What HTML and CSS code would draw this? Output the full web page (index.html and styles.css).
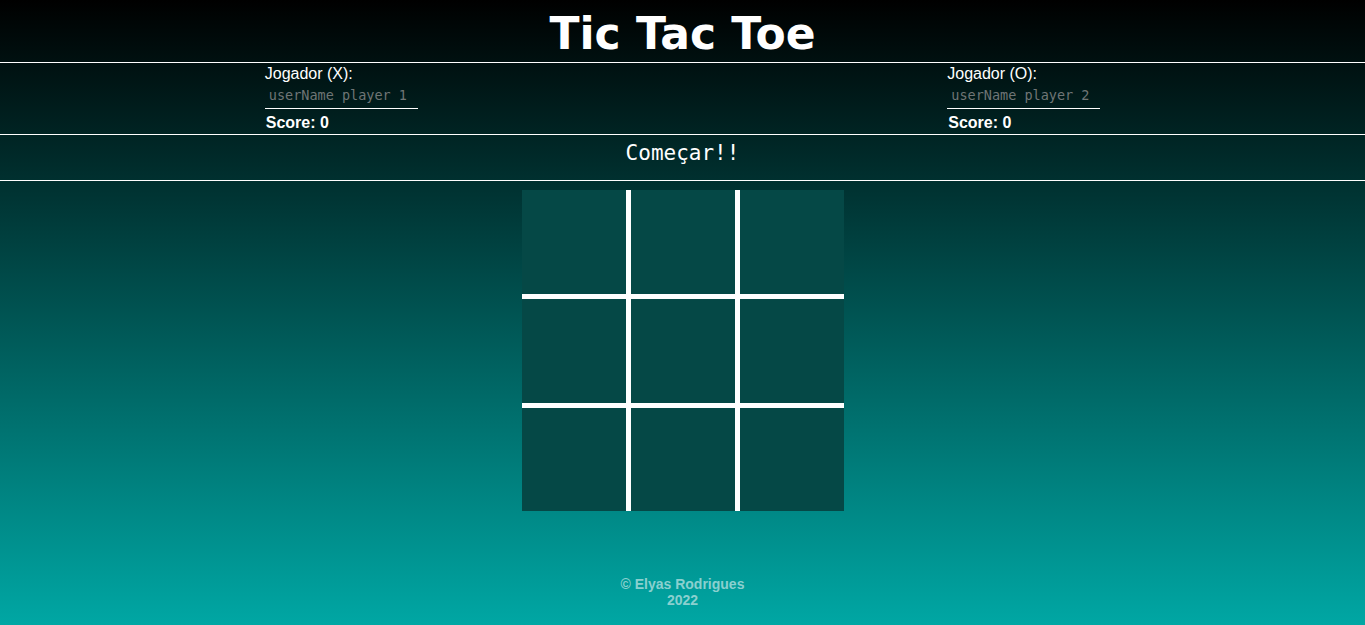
FILE: index.html
```html
<!DOCTYPE html>
<html lang="pt-BR">
<head>
<meta charset="utf-8">
<title>Tic Tac Toe</title>
<link rel="stylesheet" href="styles.css">
</head>
<body>
<header class="top">
  <h1 class="title">Tic Tac Toe</h1>
</header>
<section class="players">
  <div class="player">
    <label class="player-label" for="p1">Jogador (X):</label>
    <input class="player-input" id="p1" type="text" placeholder="userName player 1">
    <div class="score">Score: 0</div>
  </div>
  <div class="player">
    <label class="player-label" for="p2">Jogador (O):</label>
    <input class="player-input" id="p2" type="text" placeholder="userName player 2">
    <div class="score">Score: 0</div>
  </div>
</section>
<section class="start">
  <button class="start-btn" type="button">Começar!!</button>
</section>
<main class="board">
  <div class="cell"></div><div class="cell"></div><div class="cell"></div>
  <div class="cell"></div><div class="cell"></div><div class="cell"></div>
  <div class="cell"></div><div class="cell"></div><div class="cell"></div>
</main>
<footer class="footer">
  <p class="footer-text">© Elyas Rodrigues<br>2022</p>
</footer>
</body>
</html>
```

FILE: styles.css
```css
* { box-sizing: border-box; }
html, body { margin: 0; padding: 0; }
body {
  min-height: 100vh;
  display: flex;
  flex-direction: column;
  background: linear-gradient(to bottom, #000000 0%, #00a7a4 100%);
  font-family: "Liberation Sans", Arial, sans-serif;
  color: #ffffff;
  overflow: hidden;
}
.top {
  height: 63px;
  flex-shrink: 0;
  border-bottom: 1px solid #ffffff;
  display: flex;
  justify-content: center;
  align-items: center;
}
.title {
  margin: 0;
  font-family: "Comic Sans MS", "DejaVu Sans", sans-serif;
  font-weight: bold;
  font-size: 44px;
  line-height: 1;
  letter-spacing: 0;
  padding-top: 5px;
}
.players {
  display: flex;
  flex-shrink: 0;
  justify-content: space-around;
  border-bottom: 1px solid #ffffff;
  padding: 2px 0 2px;
}
.player {
  width: 153px;
  display: flex;
  flex-direction: column;
}
.player-label {
  font-size: 16px;
  line-height: 18px;
}
.player-input {
  flex-shrink: 0;
  width: 153px;
  height: 26px;
  background: transparent;
  border: none;
  border-bottom: 1px solid #ffffff;
  padding: 0 4px 1px;
  font-family: "DejaVu Sans Mono", monospace;
  font-size: 13.5px;
  color: #ffffff;
  outline: none;
}
.player-input::placeholder { color: #6f7575; }
.score {
  margin-top: 5px;
  font-size: 16px;
  font-weight: bold;
  line-height: 18px;
  padding-left: 1px;
}
.start {
  height: 46px;
  flex-shrink: 0;
  border-bottom: 1px solid #ffffff;
  display: flex;
  justify-content: center;
  align-items: flex-start;
}
.start-btn {
  margin-top: 6px;
  background: transparent;
  border: none;
  color: #ffffff;
  font-family: "DejaVu Sans Mono", monospace;
  font-size: 21px;
  letter-spacing: 0;
  cursor: pointer;
  padding: 0;
  line-height: 24px;
}
.board {
  margin: 9px auto 0;
  flex-shrink: 0;
  width: 322px;
  height: 321px;
  display: grid;
  grid-template-columns: 104px 104px 104px;
  grid-template-rows: 104px 104px 103px;
  gap: 5px;
  background: #ffffff;
}
.cell {
  background: #054846;
}
.footer {
  margin-top: auto;
  padding-bottom: 17px;
  text-align: center;
}
.footer-text {
  margin: 0;
  font-size: 14px;
  font-weight: bold;
  line-height: 16px;
  color: #8ad0cf;
}
```
